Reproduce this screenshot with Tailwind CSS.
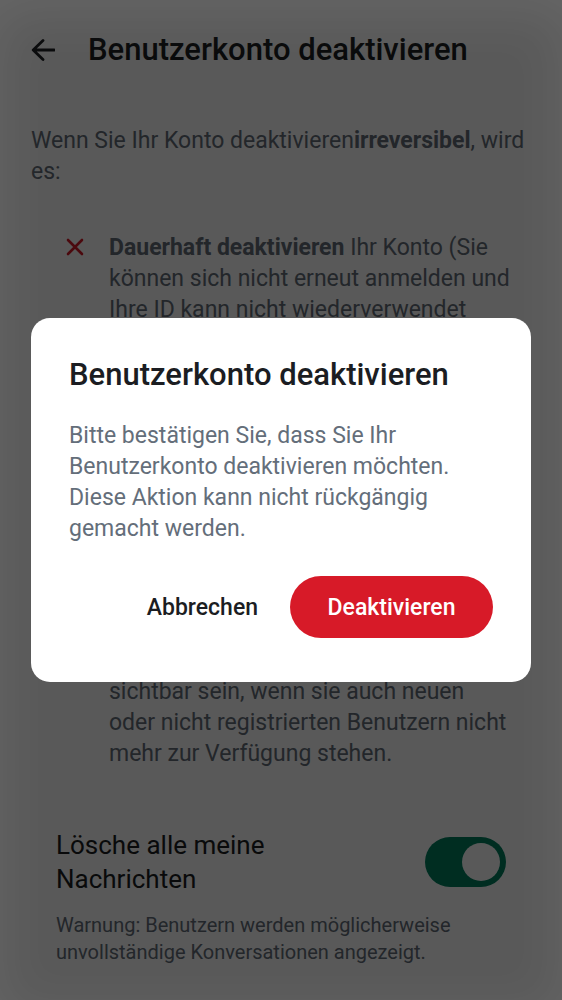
<!DOCTYPE html>
<html lang="de">
<head>
<meta charset="utf-8">
<meta name="viewport" content="width=device-width, initial-scale=1">
<title>Benutzerkonto deaktivieren</title>
<script src="https://cdn.jsdelivr.net/npm/@tailwindcss/browser@4"></script>
</head>
<body class="bg-white font-[Roboto,sans-serif] text-[23px] leading-[31px] text-[#646e7a]">
<main class="min-h-screen">
  <header class="flex items-center gap-[33px] px-[31px] pt-[31px]">
    <button type="button" aria-label="Zurück" class="text-[#1b1d22]">
      <svg class="block h-6 w-6" viewBox="0 0 24 24" fill="none" stroke="currentColor" stroke-width="2.8" stroke-linecap="round" stroke-linejoin="round"><path d="M23.200 12H2.500M12 2.400L2.200 12l9.800 9.600"/></svg>
    </button>
    <h1 class="text-[31px] leading-[38px] font-medium text-[#1b1d22]">Benutzerkonto deaktivieren</h1>
  </header>
  <p class="mt-14 px-[31px]">Wenn Sie Ihr Konto deaktivieren<strong class="font-bold">irreversibel</strong>, wird<br>es:</p>
  <ul class="mt-[45px] pr-[31px] pl-[66px]">
    <li class="flex gap-[25px]">
      <svg class="mt-[6px] h-[18px] w-[18px] shrink-0 text-[#d71a28]" viewBox="0 0 18 18" fill="none" stroke="currentColor" stroke-width="2.600" stroke-linecap="round" aria-hidden="true"><path d="M2 2l14 14M16 2L2 16"/></svg>
      <p><strong class="font-bold">Dauerhaft deaktivieren</strong> Ihr Konto (Sie<br>können sich nicht erneut anmelden und<br>Ihre ID kann nicht wiederverwendet</p>
    </li>
    <li class="mt-[351px] pl-[43px]">sichtbar sein, wenn sie auch neuen<br>oder nicht registrierten Benutzern nicht<br>mehr zur Verfügung stehen.</li>
  </ul>
  <section class="mt-[59px] px-14">
    <div class="flex items-center justify-between">
      <label for="delete-messages" class="text-[26px] leading-[34px] text-[#1b1d22]">Lösche alle meine<br>Nachrichten</label>
      <input id="delete-messages" type="checkbox" role="switch" checked aria-describedby="warning" class="h-[50px] w-[81px] shrink-0 appearance-none rounded-full bg-[#008060] p-[6px] before:block before:size-[38px] before:rounded-full before:bg-white checked:before:ml-auto">
    </div>
    <p id="warning" class="mt-4 text-[20px] leading-[27px]">Warnung: Benutzern werden möglicherweise<br>unvollständige Konversationen angezeigt.</p>
  </section>
</main>
<div class="fixed inset-0 flex items-center justify-center bg-black/65 p-[31px] shadow-[inset_0_14px_50px_rgba(255,255,255,0.07)]">
  <div role="dialog" aria-modal="true" aria-labelledby="dialog-title" aria-describedby="dialog-text" class="w-full rounded-[19px] bg-white px-[38px] pt-[38px] pb-11">
    <h2 id="dialog-title" class="text-[31px] leading-[38px] font-medium text-[#1b1d22]">Benutzerkonto deaktivieren</h2>
    <p id="dialog-text" class="mt-[26px]">Bitte bestätigen Sie, dass Sie Ihr<br>Benutzerkonto deaktivieren möchten.<br>Diese Aktion kann nicht rückgängig<br>gemacht werden.</p>
    <div class="mt-8 flex items-center justify-end gap-8 font-medium">
      <button type="button" class="text-[#1b1d22]">Abbrechen</button>
      <button type="button" class="h-[62px] w-[203px] rounded-full bg-[#d71a28] text-white">Deaktivieren</button>
    </div>
  </div>
</div>
</body>
</html>
